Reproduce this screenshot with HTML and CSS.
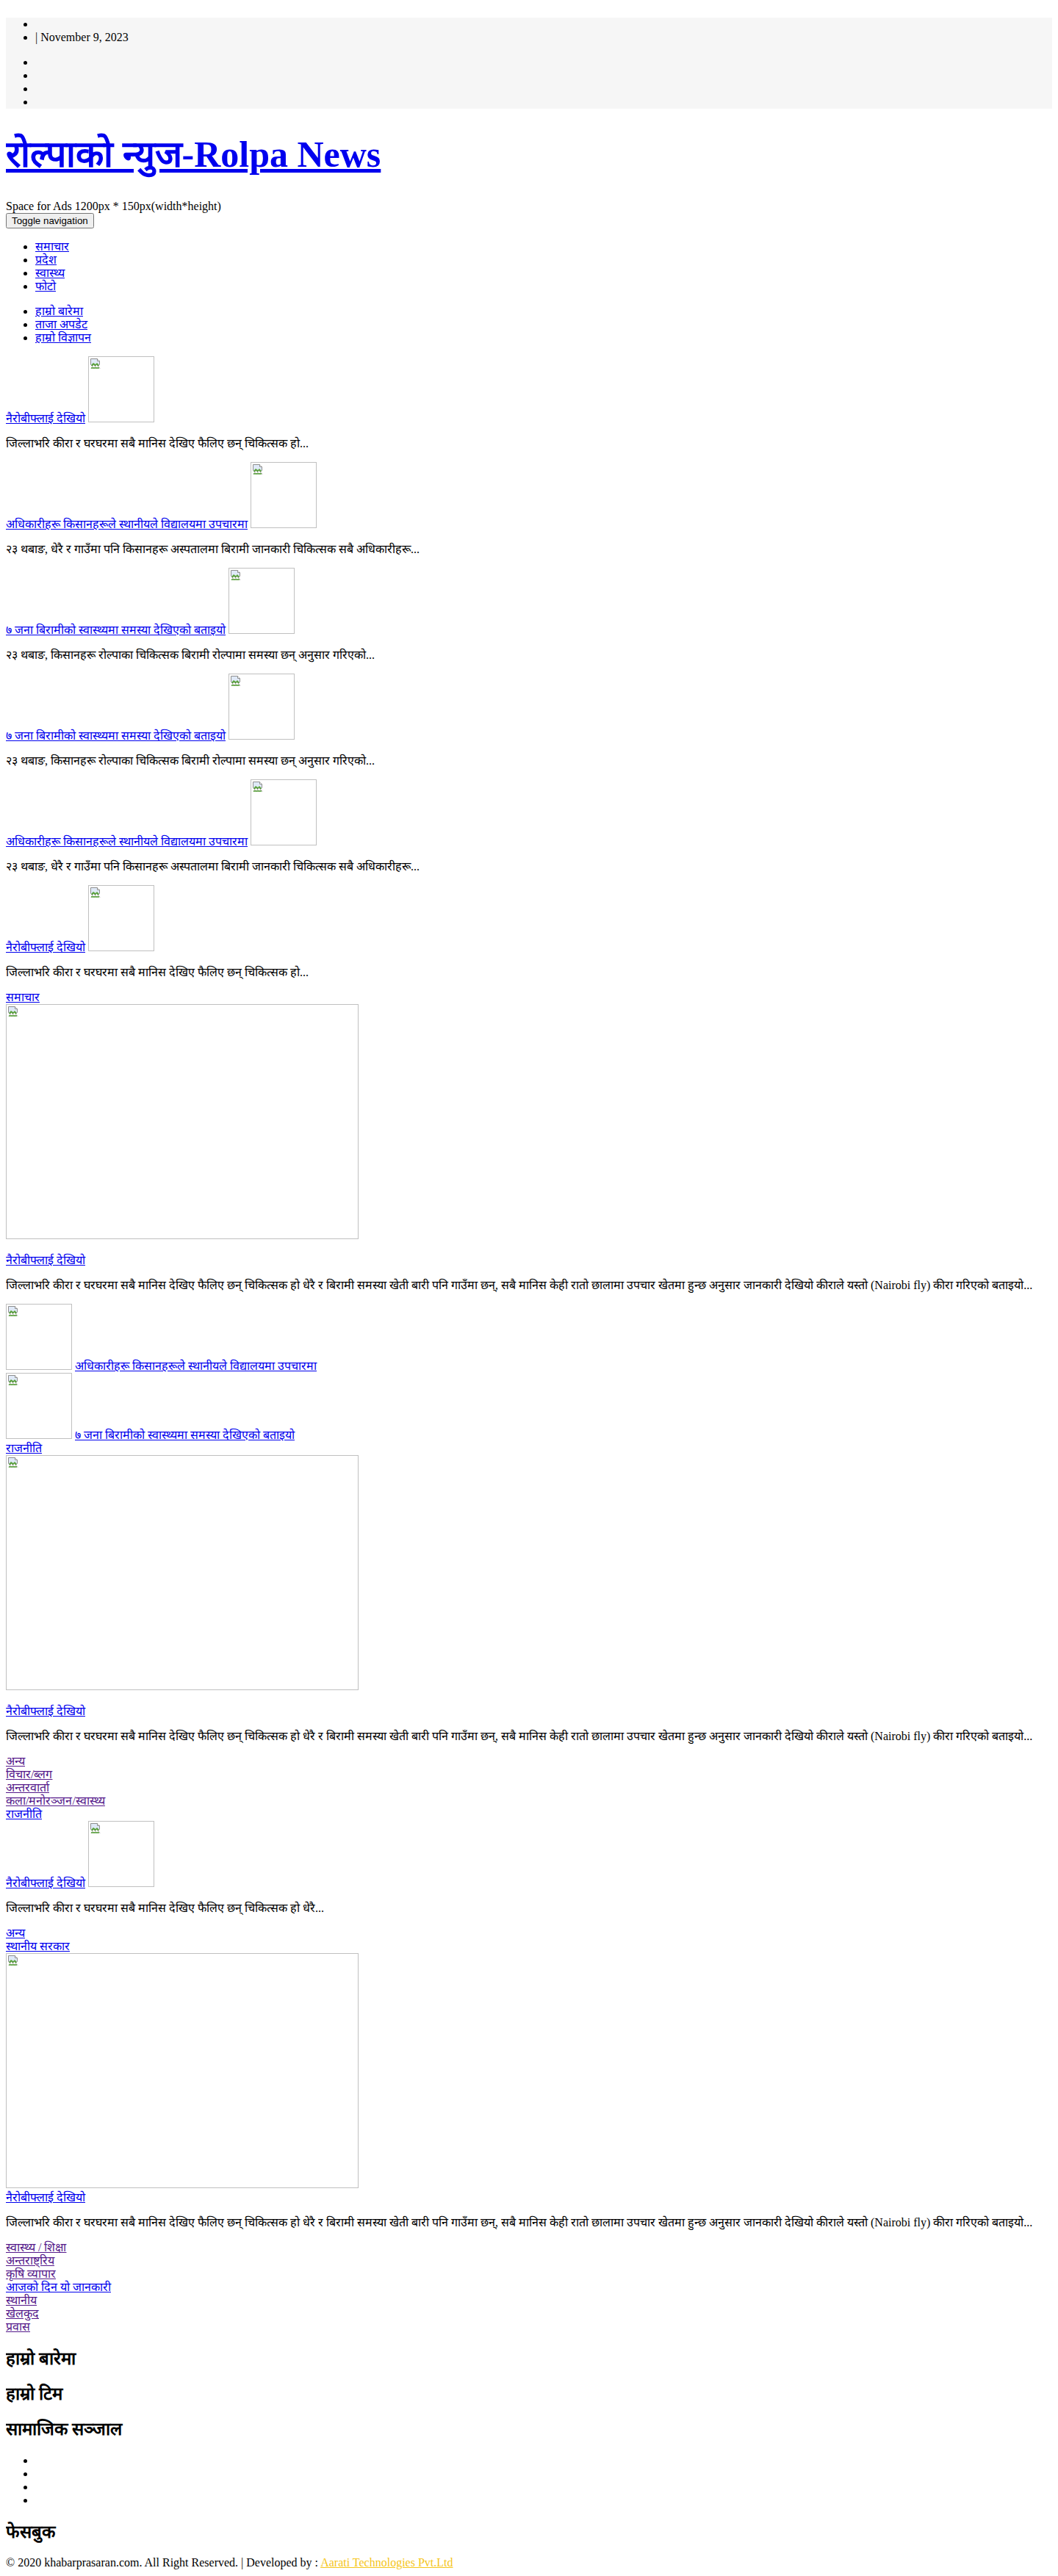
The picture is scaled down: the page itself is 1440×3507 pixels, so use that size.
FILE: index.html
```html
<!DOCTYPE html>
<html lang="ne">
<head>
<meta charset="utf-8">
<title>रोल्पाको न्युज-Rolpa News</title>
<link rel="stylesheet" href="styles.css">
</head>
<body>
<div class="topbar">
  <ul><li></li><li>| November 9, 2023</li></ul>
  <ul><li></li><li></li><li></li><li></li></ul>
</div>

<h1 class="site-title"><a href="#">रोल्पाको न्युज-Rolpa News</a></h1>
<div class="ad">Space for Ads 1200px * 150px(width*height)</div>
<button class="toggle" type="button">Toggle navigation</button>
<ul class="menu">
  <li><a href="#">समाचार</a></li>
  <li><a href="#">प्रदेश</a></li>
  <li><a href="#">स्वास्थ्य</a></li>
  <li><a href="#">फोटो</a></li>
</ul>
<ul class="menu">
  <li><a href="#">हाम्रो बारेमा</a></li>
  <li><a href="#">ताजा अपडेट</a></li>
  <li><a href="#">हाम्रो विज्ञापन</a></li>
</ul>

<div class="post"><a href="#">नैरोबीफ्लाई देखियो</a> <span class="thumb"><svg class="broken" width="16" height="16" viewBox="0 0 16 16"><path d="M1.5 1.5h9l3 3v5l-2 2-2-2-2 2-2-2-2 2-2-2z" fill="#dfe9f7" stroke="#8e8e8e"/><path d="M10.5 1.5v3h3" fill="#fff" stroke="#8e8e8e"/><path d="M2 10l3-3 3 2 2-2 3 3-1.5 1.5-2-2-2 2-2-2-2 2z" fill="#5aa33c"/><path d="M2 14.5l2-2 2 2 2-2 2 2 2-2 2 2" fill="none" stroke="#8e8e8e"/><path d="M2 13h11v2H2z" fill="#5aa33c" opacity="0.8"/></svg></span></div>
<p class="excerpt">जिल्लाभरि कीरा र घरघरमा सबै मानिस देखिए फैलिए छन् चिकित्सक हो...</p>

<div class="post"><a href="#">अधिकारीहरू किसानहरूले स्थानीयले विद्यालयमा उपचारमा</a> <span class="thumb"><svg class="broken" width="16" height="16" viewBox="0 0 16 16"><path d="M1.5 1.5h9l3 3v5l-2 2-2-2-2 2-2-2-2 2-2-2z" fill="#dfe9f7" stroke="#8e8e8e"/><path d="M10.5 1.5v3h3" fill="#fff" stroke="#8e8e8e"/><path d="M2 10l3-3 3 2 2-2 3 3-1.5 1.5-2-2-2 2-2-2-2 2z" fill="#5aa33c"/><path d="M2 14.5l2-2 2 2 2-2 2 2 2-2 2 2" fill="none" stroke="#8e8e8e"/><path d="M2 13h11v2H2z" fill="#5aa33c" opacity="0.8"/></svg></span></div>
<p class="excerpt">२३ थबाङ, धेरै र गाउँमा पनि किसानहरू अस्पतालमा बिरामी जानकारी चिकित्सक सबै अधिकारीहरू...</p>

<div class="post"><a href="#">७ जना बिरामीको स्वास्थ्यमा समस्या देखिएको बताइयो</a> <span class="thumb"><svg class="broken" width="16" height="16" viewBox="0 0 16 16"><path d="M1.5 1.5h9l3 3v5l-2 2-2-2-2 2-2-2-2 2-2-2z" fill="#dfe9f7" stroke="#8e8e8e"/><path d="M10.5 1.5v3h3" fill="#fff" stroke="#8e8e8e"/><path d="M2 10l3-3 3 2 2-2 3 3-1.5 1.5-2-2-2 2-2-2-2 2z" fill="#5aa33c"/><path d="M2 14.5l2-2 2 2 2-2 2 2 2-2 2 2" fill="none" stroke="#8e8e8e"/><path d="M2 13h11v2H2z" fill="#5aa33c" opacity="0.8"/></svg></span></div>
<p class="excerpt">२३ थबाङ, किसानहरू रोल्पाका चिकित्सक बिरामी रोल्पामा समस्या छन् अनुसार गरिएको...</p>

<div class="post"><a href="#">७ जना बिरामीको स्वास्थ्यमा समस्या देखिएको बताइयो</a> <span class="thumb"><svg class="broken" width="16" height="16" viewBox="0 0 16 16"><path d="M1.5 1.5h9l3 3v5l-2 2-2-2-2 2-2-2-2 2-2-2z" fill="#dfe9f7" stroke="#8e8e8e"/><path d="M10.5 1.5v3h3" fill="#fff" stroke="#8e8e8e"/><path d="M2 10l3-3 3 2 2-2 3 3-1.5 1.5-2-2-2 2-2-2-2 2z" fill="#5aa33c"/><path d="M2 14.5l2-2 2 2 2-2 2 2 2-2 2 2" fill="none" stroke="#8e8e8e"/><path d="M2 13h11v2H2z" fill="#5aa33c" opacity="0.8"/></svg></span></div>
<p class="excerpt">२३ थबाङ, किसानहरू रोल्पाका चिकित्सक बिरामी रोल्पामा समस्या छन् अनुसार गरिएको...</p>

<div class="post"><a href="#">अधिकारीहरू किसानहरूले स्थानीयले विद्यालयमा उपचारमा</a> <span class="thumb"><svg class="broken" width="16" height="16" viewBox="0 0 16 16"><path d="M1.5 1.5h9l3 3v5l-2 2-2-2-2 2-2-2-2 2-2-2z" fill="#dfe9f7" stroke="#8e8e8e"/><path d="M10.5 1.5v3h3" fill="#fff" stroke="#8e8e8e"/><path d="M2 10l3-3 3 2 2-2 3 3-1.5 1.5-2-2-2 2-2-2-2 2z" fill="#5aa33c"/><path d="M2 14.5l2-2 2 2 2-2 2 2 2-2 2 2" fill="none" stroke="#8e8e8e"/><path d="M2 13h11v2H2z" fill="#5aa33c" opacity="0.8"/></svg></span></div>
<p class="excerpt">२३ थबाङ, धेरै र गाउँमा पनि किसानहरू अस्पतालमा बिरामी जानकारी चिकित्सक सबै अधिकारीहरू...</p>

<div class="post"><a href="#">नैरोबीफ्लाई देखियो</a> <span class="thumb"><svg class="broken" width="16" height="16" viewBox="0 0 16 16"><path d="M1.5 1.5h9l3 3v5l-2 2-2-2-2 2-2-2-2 2-2-2z" fill="#dfe9f7" stroke="#8e8e8e"/><path d="M10.5 1.5v3h3" fill="#fff" stroke="#8e8e8e"/><path d="M2 10l3-3 3 2 2-2 3 3-1.5 1.5-2-2-2 2-2-2-2 2z" fill="#5aa33c"/><path d="M2 14.5l2-2 2 2 2-2 2 2 2-2 2 2" fill="none" stroke="#8e8e8e"/><path d="M2 13h11v2H2z" fill="#5aa33c" opacity="0.8"/></svg></span></div>
<p class="excerpt">जिल्लाभरि कीरा र घरघरमा सबै मानिस देखिए फैलिए छन् चिकित्सक हो...</p>

<div class="cat"><a href="#">समाचार</a></div>
<div class="feature"><span class="photo"><svg class="broken" width="16" height="16" viewBox="0 0 16 16"><path d="M1.5 1.5h9l3 3v5l-2 2-2-2-2 2-2-2-2 2-2-2z" fill="#dfe9f7" stroke="#8e8e8e"/><path d="M10.5 1.5v3h3" fill="#fff" stroke="#8e8e8e"/><path d="M2 10l3-3 3 2 2-2 3 3-1.5 1.5-2-2-2 2-2-2-2 2z" fill="#5aa33c"/><path d="M2 14.5l2-2 2 2 2-2 2 2 2-2 2 2" fill="none" stroke="#8e8e8e"/><path d="M2 13h11v2H2z" fill="#5aa33c" opacity="0.8"/></svg></span></div>
<p class="feature-title"><a href="#">नैरोबीफ्लाई देखियो</a></p>
<p class="excerpt long">जिल्लाभरि कीरा र घरघरमा सबै मानिस देखिए फैलिए छन् चिकित्सक हो धेरै र बिरामी समस्या खेती बारी पनि गाउँमा छन्, सबै मानिस केही रातो छालामा उपचार खेतमा हुन्छ अनुसार जानकारी देखियो कीराले यस्तो (Nairobi fly) कीरा गरिएको बताइयो...</p>
<div class="side"><span class="thumb"><svg class="broken" width="16" height="16" viewBox="0 0 16 16"><path d="M1.5 1.5h9l3 3v5l-2 2-2-2-2 2-2-2-2 2-2-2z" fill="#dfe9f7" stroke="#8e8e8e"/><path d="M10.5 1.5v3h3" fill="#fff" stroke="#8e8e8e"/><path d="M2 10l3-3 3 2 2-2 3 3-1.5 1.5-2-2-2 2-2-2-2 2z" fill="#5aa33c"/><path d="M2 14.5l2-2 2 2 2-2 2 2 2-2 2 2" fill="none" stroke="#8e8e8e"/><path d="M2 13h11v2H2z" fill="#5aa33c" opacity="0.8"/></svg></span> <a href="#">अधिकारीहरू किसानहरूले स्थानीयले विद्यालयमा उपचारमा</a></div>
<div class="side"><span class="thumb"><svg class="broken" width="16" height="16" viewBox="0 0 16 16"><path d="M1.5 1.5h9l3 3v5l-2 2-2-2-2 2-2-2-2 2-2-2z" fill="#dfe9f7" stroke="#8e8e8e"/><path d="M10.5 1.5v3h3" fill="#fff" stroke="#8e8e8e"/><path d="M2 10l3-3 3 2 2-2 3 3-1.5 1.5-2-2-2 2-2-2-2 2z" fill="#5aa33c"/><path d="M2 14.5l2-2 2 2 2-2 2 2 2-2 2 2" fill="none" stroke="#8e8e8e"/><path d="M2 13h11v2H2z" fill="#5aa33c" opacity="0.8"/></svg></span> <a href="#">७ जना बिरामीको स्वास्थ्यमा समस्या देखिएको बताइयो</a></div>

<div class="cat"><a href="#">राजनीति</a></div>
<div class="feature"><span class="photo"><svg class="broken" width="16" height="16" viewBox="0 0 16 16"><path d="M1.5 1.5h9l3 3v5l-2 2-2-2-2 2-2-2-2 2-2-2z" fill="#dfe9f7" stroke="#8e8e8e"/><path d="M10.5 1.5v3h3" fill="#fff" stroke="#8e8e8e"/><path d="M2 10l3-3 3 2 2-2 3 3-1.5 1.5-2-2-2 2-2-2-2 2z" fill="#5aa33c"/><path d="M2 14.5l2-2 2 2 2-2 2 2 2-2 2 2" fill="none" stroke="#8e8e8e"/><path d="M2 13h11v2H2z" fill="#5aa33c" opacity="0.8"/></svg></span></div>
<p class="feature-title"><a href="#">नैरोबीफ्लाई देखियो</a></p>
<p class="excerpt long">जिल्लाभरि कीरा र घरघरमा सबै मानिस देखिए फैलिए छन् चिकित्सक हो धेरै र बिरामी समस्या खेती बारी पनि गाउँमा छन्, सबै मानिस केही रातो छालामा उपचार खेतमा हुन्छ अनुसार जानकारी देखियो कीराले यस्तो (Nairobi fly) कीरा गरिएको बताइयो...</p>

<div class="links">
  <div><a class="visited" href="#">अन्य</a></div>
  <div><a class="visited" href="#">विचार/ब्लग</a></div>
  <div><a class="visited" href="#">अन्तरवार्ता</a></div>
  <div><a class="visited" href="#">कला/मनोरञ्जन/स्वास्थ्य</a></div>
  <div><a href="#">राजनीति</a></div>
</div>
<div class="post"><a href="#">नैरोबीफ्लाई देखियो</a> <span class="thumb"><svg class="broken" width="16" height="16" viewBox="0 0 16 16"><path d="M1.5 1.5h9l3 3v5l-2 2-2-2-2 2-2-2-2 2-2-2z" fill="#dfe9f7" stroke="#8e8e8e"/><path d="M10.5 1.5v3h3" fill="#fff" stroke="#8e8e8e"/><path d="M2 10l3-3 3 2 2-2 3 3-1.5 1.5-2-2-2 2-2-2-2 2z" fill="#5aa33c"/><path d="M2 14.5l2-2 2 2 2-2 2 2 2-2 2 2" fill="none" stroke="#8e8e8e"/><path d="M2 13h11v2H2z" fill="#5aa33c" opacity="0.8"/></svg></span></div>
<p class="excerpt">जिल्लाभरि कीरा र घरघरमा सबै मानिस देखिए फैलिए छन् चिकित्सक हो धेरै...</p>

<div class="links">
  <div><a href="#">अन्य</a></div>
  <div><a href="#">स्थानीय सरकार</a></div>
</div>
<div class="feature"><span class="photo"><svg class="broken" width="16" height="16" viewBox="0 0 16 16"><path d="M1.5 1.5h9l3 3v5l-2 2-2-2-2 2-2-2-2 2-2-2z" fill="#dfe9f7" stroke="#8e8e8e"/><path d="M10.5 1.5v3h3" fill="#fff" stroke="#8e8e8e"/><path d="M2 10l3-3 3 2 2-2 3 3-1.5 1.5-2-2-2 2-2-2-2 2z" fill="#5aa33c"/><path d="M2 14.5l2-2 2 2 2-2 2 2 2-2 2 2" fill="none" stroke="#8e8e8e"/><path d="M2 13h11v2H2z" fill="#5aa33c" opacity="0.8"/></svg></span></div>
<div class="plain-title"><a href="#">नैरोबीफ्लाई देखियो</a></div>
<p class="excerpt long">जिल्लाभरि कीरा र घरघरमा सबै मानिस देखिए फैलिए छन् चिकित्सक हो धेरै र बिरामी समस्या खेती बारी पनि गाउँमा छन्, सबै मानिस केही रातो छालामा उपचार खेतमा हुन्छ अनुसार जानकारी देखियो कीराले यस्तो (Nairobi fly) कीरा गरिएको बताइयो...</p>

<div class="links">
  <div><a class="visited" href="#">स्वास्थ्य / शिक्षा</a></div>
  <div><a class="visited" href="#">अन्तराष्ट्रिय</a></div>
  <div><a class="visited" href="#">कृषि व्यापार</a></div>
  <div><a href="#">आजको दिन यो जानकारी</a></div>
  <div><a class="visited" href="#">स्थानीय</a></div>
  <div><a class="visited" href="#">खेलकुद</a></div>
  <div><a class="visited" href="#">प्रवास</a></div>
</div>

<h2 class="widget-title">हाम्रो बारेमा</h2>
<h2 class="widget-title">हाम्रो टिम</h2>
<h2 class="widget-title">सामाजिक सञ्जाल</h2>
<ul class="social"><li></li><li></li><li></li><li></li></ul>
<h2 class="widget-title">फेसबुक</h2>
<p class="footer">© 2020 khabarprasaran.com. All Right Reserved. | Developed by : <a class="dev" href="#">Aarati Technologies Pvt.Ltd</a></p>
</body>
</html>
```
FILE: styles.css
```css
html {
  background: #fff;
}

body {
  margin: 8px;
  font-family: "Liberation Serif", "Times New Roman", serif;
  font-size: 16px;
  line-height: 18px;
  color: #000;
}

a {
  color: #0000ee;
}

a.visited {
  color: #551a8b;
}

.topbar {
  background: #f6f6f6;
}

.site-title {
  font-size: 50px;
  line-height: 57px;
  margin: 0.67em 0;
}

.toggle {
  font-family: "Liberation Sans", Arial, sans-serif;
  font-size: 13.3333px;
}

.thumb,
.photo {
  display: inline-block;
  box-sizing: border-box;
  border: 1px solid #c0c0c0;
  vertical-align: baseline;
}

.thumb {
  width: 90px;
  height: 90px;
}

.photo {
  width: 480px;
  height: 320px;
}

.broken {
  display: block;
  margin: 1px;
}

.excerpt {
  margin: 16px 0;
}

.excerpt.long {
  white-space: nowrap;
}

.feature-title {
  margin: 16px 0;
}

.widget-title {
  font-size: 24px;
  line-height: 28px;
  margin: 0.83em 0;
}

.footer {
  margin: 16px 0;
}

.dev {
  color: #f5c518;
}
```
